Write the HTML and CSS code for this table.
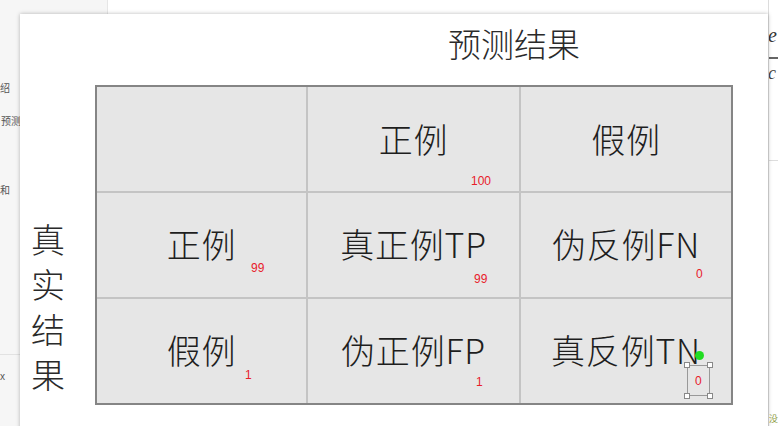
FILE: index.html
```html
<!DOCTYPE html>
<html lang="zh">
<head>
<meta charset="utf-8">
<link rel="stylesheet" href="styles.css">
</head>
<body>
<div class="app">
  <aside class="side">
    <div class="side-item s1">绍</div>
    <div class="side-item s2">预测</div>
    <div class="side-item s3">和</div>
    <div class="side-sep"></div>
    <div class="side-item s4">x</div>
  </aside>
  <main class="doc"></main>
  <aside class="right">
    <div class="r-e">e</div>
    <div class="r-line dark"></div>
    <div class="r-c">c</div>
    <div class="r-line light"></div>
    <div class="r-foot">没</div>
  </aside>
</div>

<div class="panel">
  <div class="title">预测结果</div>
  <div class="body">
    <div class="vlabel"><span>真</span><span>实</span><span>结</span><span>果</span></div>
    <div class="matrix">
      <div class="cell"></div>
      <div class="cell"><span class="t t-top">正例</span><span class="n n100">100</span></div>
      <div class="cell"><span class="t t-top">假例</span></div>
      <div class="cell"><span class="t">正例</span><span class="n n99a">99</span></div>
      <div class="cell"><span class="t">真正例TP</span><span class="n n99b">99</span></div>
      <div class="cell"><span class="t">伪反例FN</span><span class="n n0a">0</span></div>
      <div class="cell"><span class="t">假例</span><span class="n n1a">1</span></div>
      <div class="cell"><span class="t">伪正例FP</span><span class="n n1b">1</span></div>
      <div class="cell"><span class="t">真反例TN</span>
        <span class="dot"></span>
        <span class="selbox"><span class="n0b">0</span><i class="h h1"></i><i class="h h2"></i><i class="h h3"></i><i class="h h4"></i></span>
      </div>
    </div>
  </div>
</div>
</body>
</html>
```
FILE: styles.css
```css
html, body {
  margin: 0;
  padding: 0;
  width: 778px;
  height: 426px;
  overflow: hidden;
  background: #fff;
  font-family: "Noto Sans CJK SC", "Noto Sans", sans-serif;
}
.app {
  display: flex;
  height: 426px;
}
.side {
  width: 107px;
  flex: none;
  background: #f6f6f6;
  border-right: 1px solid #e6e6e6;
  position: relative;
  color: #555;
  font-size: 10px;
}
.side-item { position: absolute; line-height: 12px; }
.s1 { left: 0; top: 82px; }
.s2 { left: 1px; top: 115px; }
.s3 { left: 0; top: 184px; }
.s4 { left: 0; top: 371px; font-family: "Liberation Sans", sans-serif; }
.side-sep { position: absolute; left: 0; right: 0; top: 354px; border-top: 1px solid #e2e2e2; }
.doc { flex: 1; background: #fff; }
.right {
  width: 9px;
  flex: none;
  border-left: 1px solid #dcdcdc;
  background: #fff;
  position: relative;
  overflow: hidden;
}
.r-e { position: absolute; left: -1px; top: 24px; font: italic 20px "Liberation Serif", serif; color: #333; }
.r-c { position: absolute; left: -1px; top: 63px; font: italic 18px "Liberation Serif", serif; color: #444; }
.r-line { position: absolute; left: 0; right: 0; }
.r-line.dark { top: 57px; border-top: 2px solid #666; }
.r-line.light { top: 160px; border-top: 1px solid #ddd; }
.r-foot { position: absolute; left: 0; top: 413px; font-size: 9px; line-height: 11px; color: #8a9a3a; }

.panel {
  position: absolute;
  left: 20px;
  top: 14px;
  width: 748px;
  height: 420px;
  background: #fff;
  box-shadow: 0 0 4px rgba(0,0,0,0.28);
  display: flex;
  flex-direction: column;
}
.title {
  height: 71px;
  box-sizing: border-box;
  padding-left: 428px;
  padding-top: 8px;
  font-size: 33px;
  font-weight: 300;
  line-height: 42px;
  color: #2a2a2a;
}
.body {
  display: flex;
}
.vlabel {
  width: 75px;
  display: flex;
  flex-direction: column;
  align-items: flex-start;
  padding-left: 11px;
  padding-top: 131px;
  box-sizing: border-box;
  font-size: 34px;
  font-weight: 300;
  line-height: 45px;
  color: #2a2a2a;
}
.matrix {
  width: 638px;
  height: 320px;
  box-sizing: border-box;
  border: 2px solid #858585;
  display: grid;
  grid-template-columns: 211px 213px 1fr;
  grid-template-rows: 106px 106px 1fr;
  background: #e6e6e6;
}
.cell {
  position: relative;
  border-right: 2px solid #c4c4c4;
  border-bottom: 2px solid #c4c4c4;
  display: flex;
  align-items: center;
  justify-content: center;
}
.cell:nth-child(3n) { border-right: none; }
.cell:nth-child(n+7) { border-bottom: none; }
.t {
  font-size: 34px;
  font-weight: 300;
  color: #1e1e1e;
  line-height: 42px;
  letter-spacing: 0.8px;
  margin-top: -2px;
}
.t-top { margin-top: 0; }
.n, .n0b {
  position: absolute;
  color: #e8202a;
  font-family: "Liberation Sans", sans-serif;
  font-size: 12px;
  line-height: 12px;
}
.n100 { left: 163px; top: 88px; }
.n99a { left: 154px; top: 69px; }
.n99b { left: 166px; top: 80px; }
.n0a { left: 175px; top: 75px; }
.n1a { left: 148px; top: 70px; }
.n1b { left: 168px; top: 77px; }
.dot {
  position: absolute;
  left: 174px;
  top: 52px;
  width: 9px;
  height: 9px;
  border-radius: 50%;
  background: #22dd22;
}
.selbox {
  position: absolute;
  left: 166px;
  top: 66px;
  width: 23px;
  height: 31px;
  border: 1px solid #999;
  box-sizing: border-box;
}
.n0b { position: absolute; left: 7px; top: 9px; }
.h {
  position: absolute;
  width: 6px;
  height: 6px;
  box-sizing: border-box;
  background: #fff;
  border: 1px solid #888;
}
.h1 { left: -4px; top: -4px; }
.h2 { right: -4px; top: -4px; }
.h3 { left: -4px; bottom: -4px; }
.h4 { right: -4px; bottom: -4px; }
```
